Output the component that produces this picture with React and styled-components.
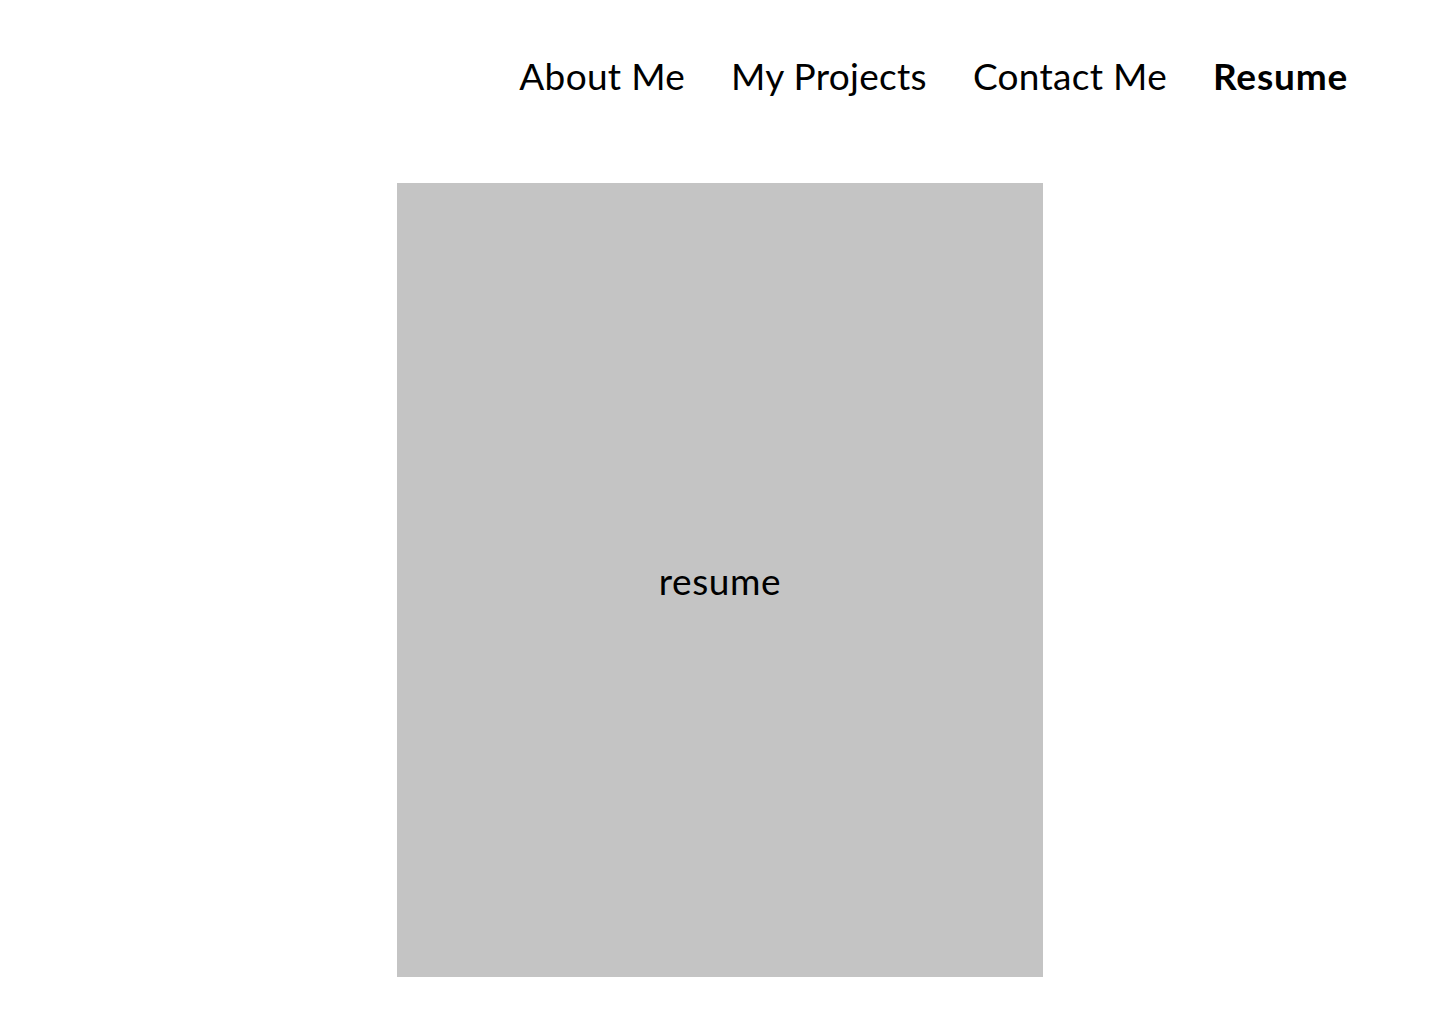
import React from 'react';
import styled, { createGlobalStyle } from 'styled-components';

const GlobalStyle = createGlobalStyle`
  html, body {
    margin: 0;
    padding: 0;
    background: #ffffff;
    font-family: 'Lato', 'Open Sans', sans-serif;
    color: #000;
  }
`;

const Page = styled.div`
  width: 1440px;
  min-height: 1024px;
  display: flex;
  flex-direction: column;
`;

const Header = styled.header`
  height: 152px;
  display: flex;
  align-items: center;
  justify-content: flex-end;
  padding-right: 92px;
`;

const Nav = styled.nav`
  display: flex;
  align-items: center;
  gap: 46px;
`;

const NavLink = styled.a`
  font-size: 37px;
  line-height: 1.2;
  font-weight: ${({ $active }) => ($active ? 700 : 400)};
  color: #000;
  text-decoration: none;
  letter-spacing: ${({ $active }) => ($active ? '0.8px' : '0.3px')};
  cursor: pointer;
`;

const Main = styled.main`
  display: flex;
  justify-content: center;
  padding-top: 31px;
`;

const ResumeBox = styled.div`
  width: 646px;
  height: 794px;
  background: #c4c4c4;
  display: flex;
  align-items: center;
  justify-content: center;
  font-size: 37px;
  letter-spacing: 0.6px;
`;

const links = ['About Me', 'My Projects', 'Contact Me', 'Resume'];

const App = () => {
  return (
    <Page>
      <GlobalStyle />
      <Header>
        <Nav>
          {links.map((label) => (
            <NavLink key={label} $active={label === 'Resume'}>
              {label}
            </NavLink>
          ))}
        </Nav>
      </Header>
      <Main>
        <ResumeBox>resume</ResumeBox>
      </Main>
    </Page>
  );
};

export default App;
